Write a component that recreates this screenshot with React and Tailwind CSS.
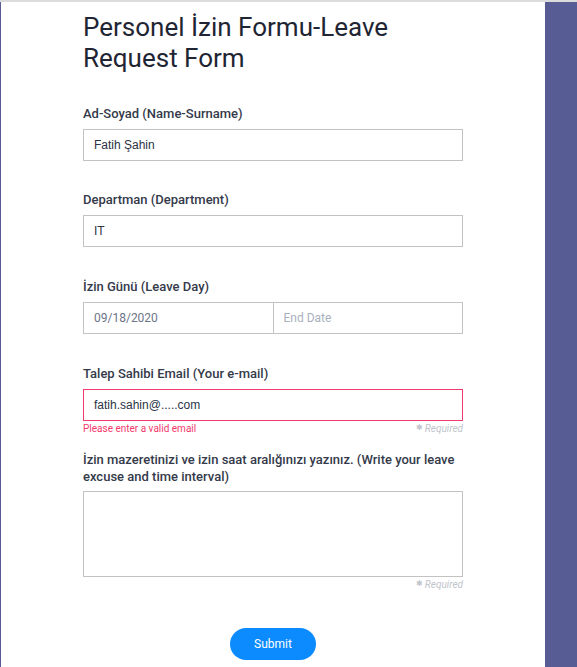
import React from 'react';

const Label = ({ children }) => (
  <label className="block text-[13px] leading-[20px] font-medium text-[#343a4a] mb-[5px]">{children}</label>
);

const Required = () => (
  <span className="flex items-center gap-[2px] text-[10px] italic text-[#c0c4cc]">
    <span className="text-[8px] not-italic">✱</span>Required
  </span>
);

export default function App() {
  return (
    <div className="h-[667px] w-[577px] flex border-t-2 border-[#dcdcdc] bg-white overflow-hidden" style={{ fontFamily: 'Roboto, "Liberation Sans", sans-serif' }}>
      <div className="flex-1 border-l border-[#585c94] pl-[82px] pr-[82px]">
        <h1 className="text-[26px] leading-[31px] font-normal text-[#1f2533] mt-[10px] mb-[30px]">
          Personel İzin Formu-Leave Request Form
        </h1>

        <div className="mb-[29px]">
          <Label>Ad-Soyad (Name-Surname)</Label>
          <div className="h-[32px] border border-[#c3c3c3] flex items-center px-[10px] text-[12px] text-[#2c3345]" style={{ fontFamily: '"Liberation Sans", Arial, sans-serif' }}>
            Fatih Şahin
          </div>
        </div>

        <div className="mb-[30px]">
          <Label>Departman (Department)</Label>
          <div className="h-[32px] border border-[#c3c3c3] flex items-center px-[10px] text-[12px] text-[#2c3345]" style={{ fontFamily: '"Liberation Sans", Arial, sans-serif' }}>
            IT
          </div>
        </div>

        <div className="mb-[30px]">
          <Label>İzin Günü (Leave Day)</Label>
          <div className="h-[32px] border border-[#c3c3c3] flex text-[12px]">
            <div className="flex-1 flex items-center px-[10px] text-[#6b7489]">09/18/2020</div>
            <div className="flex-1 flex items-center px-[10px] border-l border-[#c3c3c3] text-[#a9b0bd]">End Date</div>
          </div>
        </div>

        <div className="mb-[16px]">
          <Label>Talep Sahibi Email (Your e-mail)</Label>
          <div className="h-[32px] border border-[#f23a6c] flex items-center px-[10px] text-[12px] text-[#2c3345]" style={{ fontFamily: '"Liberation Sans", Arial, sans-serif' }}>
            fatih.sahin@.....com
          </div>
          <div className="flex justify-between items-center h-[14px]">
            <span className="text-[10px] text-[#f23a6c]">Please enter a valid email</span>
            <Required />
          </div>
        </div>

        <div>
          <label className="block text-[13px] leading-[17px] font-medium text-[#343a4a] mb-[6px]">
            İzin mazeretinizi ve izin saat aralığınızı yazınız. (Write your leave excuse and time interval)
          </label>
          <div className="h-[86px] border border-[#c3c3c3]"></div>
          <div className="flex justify-end items-center h-[14px]">
            <Required />
          </div>
        </div>

        <div className="flex justify-center mt-[37px]">
          <button className="w-[86px] h-[32px] rounded-full bg-[#0c8bff] text-white text-[12px]">Submit</button>
        </div>
      </div>
      <div className="w-[32px] bg-[#585c94]"></div>
    </div>
  );
}
